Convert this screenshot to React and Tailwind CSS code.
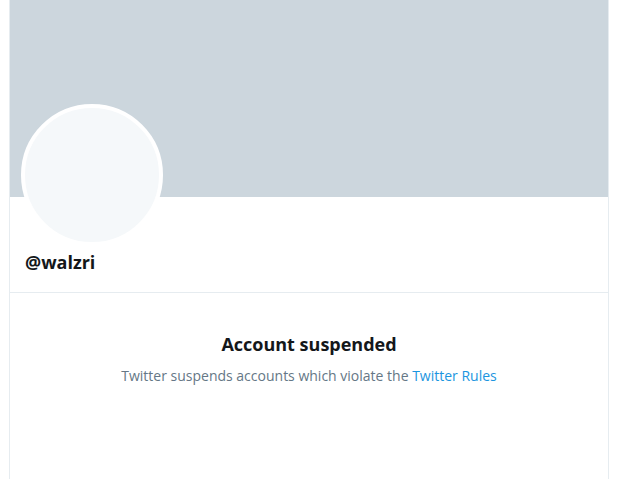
export default function App() {
  return (
    <div className="min-h-[479px] bg-white font-['Open_Sans',sans-serif]">
      <div className="ml-[9px] min-h-[479px] w-[600px] border-x border-[#e6ecf0]">
        <div className="h-[197px] bg-[#ccd6dd]" />
        <div className="border-b border-[#e6ecf0] px-[11px] pb-[18px]">
          <div className="-mt-[93px] h-[142px] w-[142px] rounded-full border-4 border-white bg-[#f5f8fa]" />
          <div className="ml-[4px] mt-[4px] text-[18px] font-bold leading-[24px] text-[#14171a]">@walzri</div>
        </div>
        <div className="pt-[39px] text-center">
          <h2 className="text-[18px] font-bold leading-[24px] text-[#14171a]">Account suspended</h2>
          <p className="mt-[10px] text-[14px] leading-[20px] text-[#657786]">
            Twitter suspends accounts which violate the{" "}
            <a href="#" className="text-[#1b95e0]">Twitter Rules</a>
          </p>
        </div>
      </div>
    </div>
  );
}
